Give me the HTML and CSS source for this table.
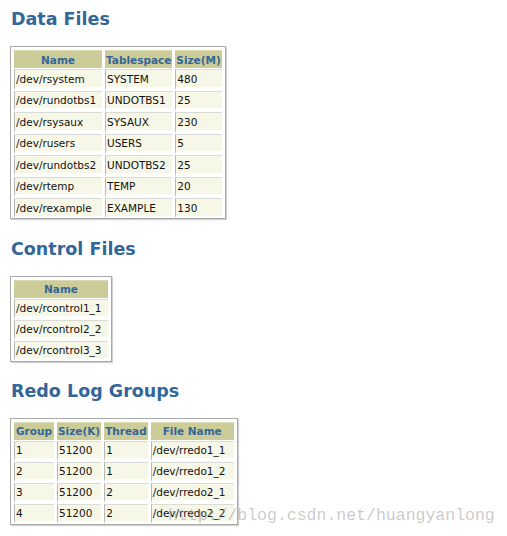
FILE: index.html
```html
<!DOCTYPE html>
<html>
<head>
<meta charset="utf-8">
<title>Storage</title>
<link rel="stylesheet" href="styles.css">
</head>
<body>
<main class="page">
  <h2 class="title">Data Files</h2>
  <table class="grid grid--tall">
    <thead>
      <tr><th class="w-name">Name</th><th class="w-ts">Tablespace</th><th class="w-size">Size(M)</th></tr>
    </thead>
    <tbody>
      <tr><td>/dev/rsystem</td><td>SYSTEM</td><td>480</td></tr>
      <tr><td>/dev/rundotbs1</td><td>UNDOTBS1</td><td>25</td></tr>
      <tr><td>/dev/rsysaux</td><td>SYSAUX</td><td>230</td></tr>
      <tr><td>/dev/rusers</td><td>USERS</td><td>5</td></tr>
      <tr><td>/dev/rundotbs2</td><td>UNDOTBS2</td><td>25</td></tr>
      <tr><td>/dev/rtemp</td><td>TEMP</td><td>20</td></tr>
      <tr><td>/dev/rexample</td><td>EXAMPLE</td><td>130</td></tr>
    </tbody>
  </table>

  <h2 class="title">Control Files</h2>
  <table class="grid">
    <thead>
      <tr><th class="w-ctl">Name</th></tr>
    </thead>
    <tbody>
      <tr><td>/dev/rcontrol1_1</td></tr>
      <tr><td>/dev/rcontrol2_2</td></tr>
      <tr><td>/dev/rcontrol3_3</td></tr>
    </tbody>
  </table>

  <h2 class="title title--last">Redo Log Groups</h2>
  <table class="grid">
    <thead>
      <tr><th class="w-group">Group</th><th class="w-ksize">Size(K)</th><th class="w-thread">Thread</th><th class="w-file">File Name</th></tr>
    </thead>
    <tbody>
      <tr><td>1</td><td>51200</td><td>1</td><td>/dev/rredo1_1</td></tr>
      <tr><td>2</td><td>51200</td><td>1</td><td>/dev/rredo1_2</td></tr>
      <tr><td>3</td><td>51200</td><td>2</td><td>/dev/rredo2_1</td></tr>
      <tr><td>4</td><td>51200</td><td>2</td><td>/dev/rredo2_2</td></tr>
    </tbody>
  </table>
</main>
<div class="watermark">http://blog.csdn.net/huangyanlong</div>
</body>
</html>
```

FILE: styles.css
```css
* {
  box-sizing: border-box;
}

html, body {
  margin: 0;
  background: #ffffff;
}

body {
  position: relative;
  min-height: 536px;
  font-family: "DejaVu Sans", Verdana, sans-serif;
}

.page {
  padding: 9px 10px 0 10px;
}

.title {
  margin: 20px 0 17px 1px;
  font-size: 17.5px;
  line-height: 20px;
  font-weight: bold;
  color: #336699;
}

.title:first-child {
  margin-top: 0;
}

.title--last {
  margin-top: 19px;
}

.grid {
  border-collapse: separate;
  border-spacing: 3px 0;
  padding: 3px 0 0 0;
  border: 1px solid #a9a9a9;
  box-shadow: 1px 1px 1px rgba(0, 0, 0, 0.18);
  background: #ffffff;
  font-size: 10.5px;
}

.grid th {
  background: #cccc99;
  background-clip: padding-box;
  color: #336699;
  font-weight: bold;
  text-align: center;
  line-height: 14px;
  padding: 1.5px 1px 1.5px 1px;
  border-top: 1px solid #d9d9b4;
  border-bottom: 1.5px solid transparent;
  white-space: nowrap;
}

.grid td {
  background: #f7f7e7;
  background-clip: padding-box;
  color: #111111;
  line-height: 14px;
  padding: 1px 1px 1px 1px;
  border-top: 1px solid #dcdcd6;
  border-left: 1px solid #b9b9b4;
  border-bottom: 4px solid transparent;
  white-space: nowrap;
  text-align: left;
}

.grid--tall td {
  padding-top: 1.5px;
}

.grid tbody tr:last-child td {
  border-bottom-width: 3px;
}

.grid--tall tbody tr:last-child td {
  border-bottom-width: 2px;
}

.w-name { width: 88px; }
.w-ts { width: 67px; }
.w-size { width: 45px; }
.w-ctl { width: 94px; }
.w-group { width: 40px; }
.w-ksize { width: 43px; }
.w-thread { width: 43px; }
.w-file { width: 83px; }

.watermark {
  position: absolute;
  left: 168px;
  top: 508px;
  font-family: "Liberation Mono", "Courier New", monospace;
  font-size: 16.5px;
  line-height: 16.5px;
  color: rgba(150, 150, 150, 0.5);
  white-space: nowrap;
  pointer-events: none;
}
```
